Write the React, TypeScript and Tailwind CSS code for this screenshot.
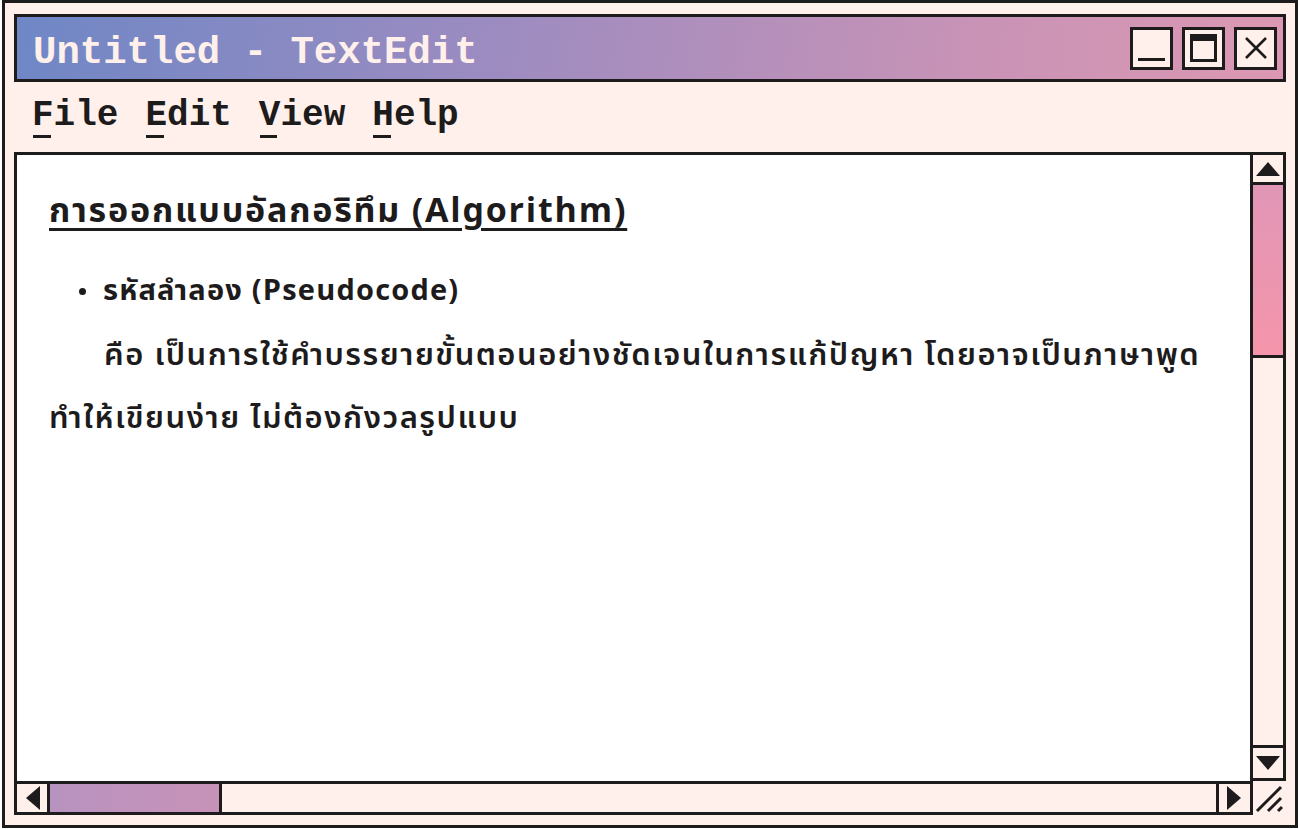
import React from "react";

const ink = "border-[#1d1b1c]";

function TitleButton({ children }: { children: React.ReactNode }) {
  return (
    <div className={`flex h-[43px] w-[43px] items-center justify-center border-[3px] ${ink} bg-[#fff0eb]`}>
      {children}
    </div>
  );
}

function Tri({ dir }: { dir: "up" | "down" | "left" | "right" }) {
  const pts = {
    up: "12,2 24,16 0,16",
    down: "0,2 24,2 12,16",
    left: "16,0 16,24 2,12",
    right: "0,0 0,24 14,12",
  }[dir];
  const w = dir === "up" || dir === "down" ? 24 : 16;
  const h = dir === "up" || dir === "down" ? 18 : 24;
  return (
    <svg width={w} height={h} viewBox={`0 0 ${w} ${h}`}>
      <polygon points={pts} fill="#1d1b1c" />
    </svg>
  );
}

function MenuItem({ first, rest }: { first: string; rest: string }) {
  return (
    <span>
      <span className="relative">
        {first}
        <span className="absolute left-[1px] right-[3px] bottom-[-2px] h-[3px] bg-[#1d1b1c]" />
      </span>
      {rest}
    </span>
  );
}

export default function App() {
  const thai = "font-['Noto_Sans_Thai','Noto_Sans',sans-serif]";
  return (
    <div className="h-[829px] w-[1299px] bg-white pl-[2px]">
      <div className={`flex h-[828px] w-[1296px] flex-col border-[3px] ${ink} bg-[#fff0eb] px-[9px] pt-[11px] pb-[10px]`}>
        {/* title bar */}
        <div className={`flex h-[68px] items-center justify-between border-[3px] ${ink} bg-[linear-gradient(100deg,#6f87c6_0%,#9f8cc0_40%,#c893b6_75%,#dc98b2_100%)] pl-[16px] pr-[6px]`}>
          <span className="pt-[10px] font-['Liberation_Mono',monospace] text-[39px] font-bold leading-none text-[#fff0eb]">
            Untitled - TextEdit
          </span>
          <div className="flex gap-[9px]">
            <TitleButton>
              <div className="mt-[22px] h-[3px] w-[27px] bg-[#1d1b1c]" />
            </TitleButton>
            <TitleButton>
              <div className={`h-[28px] w-[27px] border-[3px] border-t-[7px] ${ink}`} />
            </TitleButton>
            <TitleButton>
              <svg width="26" height="26" viewBox="0 0 26 26">
                <path d="M3 3 L23 23 M23 3 L3 23" stroke="#1d1b1c" strokeWidth="2.6" />
              </svg>
            </TitleButton>
          </div>
        </div>

        {/* menu */}
        <div className="flex h-[70px] items-center gap-[27px] pl-[18px] pb-[2px] font-['Liberation_Mono',monospace] text-[36px] font-bold text-[#1d1b1c]">
          <MenuItem first="F" rest="ile" />
          <MenuItem first="E" rest="dit" />
          <MenuItem first="V" rest="iew" />
          <MenuItem first="H" rest="elp" />
        </div>

        {/* document area */}
        <div className="flex flex-1 flex-col">
          <div className="flex flex-1">
            <div className={`flex-1 border-l-[3px] border-t-[3px] ${ink} bg-white pl-[32px] pr-[30px] pt-[37px] text-[#1d1b1c] ${thai}`}>
              <h1 className="text-[34px] font-bold leading-[40px] tracking-[1.8px] underline decoration-[3px] underline-offset-[6px]">
                การออกแบบอัลกอริทึม (Algorithm)
              </h1>
              <div className="mt-[39px] flex items-center gap-[17px] pl-[30px] text-[29px] font-bold leading-[40px] tracking-[1.2px]">
                <span className="h-[7px] w-[7px] rounded-full bg-[#1d1b1c]" />
                <span>รหัสลำลอง (Pseudocode)</span>
              </div>
              <p className="mt-[13px] indent-[55px] text-[31px] font-semibold leading-[63px] tracking-[1.5px]">
                คือ เป็นการใช้คำบรรยายขั้นตอนอย่างชัดเจนในการแก้ปัญหา โดยอาจเป็นภาษาพูด
                <br />
                ทำให้เขียนง่าย ไม่ต้องกังวลรูปแบบ
              </p>
            </div>
            <div className={`flex w-[36px] flex-col border-[3px] ${ink} bg-[#fff0eb]`}>
              <div className={`flex h-[30px] items-center justify-center border-b-[3px] ${ink}`}>
                <Tri dir="up" />
              </div>
              <div className={`h-[173px] border-b-[3px] ${ink} bg-[linear-gradient(180deg,#e196b6,#f595ab)]`} />
              <div className="flex-1" />
              <div className={`flex h-[33px] items-center justify-center border-t-[3px] ${ink}`}>
                <Tri dir="down" />
              </div>
            </div>
          </div>
          <div className="flex h-[34px]">
            <div className={`flex flex-1 border-[3px] ${ink} bg-[#fff0eb]`}>
              <div className={`flex w-[33px] items-center justify-center border-r-[3px] ${ink}`}>
                <Tri dir="left" />
              </div>
              <div className={`w-[172px] border-r-[3px] ${ink} bg-[linear-gradient(90deg,#b893c0,#c792b8)]`} />
              <div className="flex-1" />
              <div className={`flex w-[34px] items-center justify-center border-l-[3px] ${ink}`}>
                <Tri dir="right" />
              </div>
            </div>
            <div className="flex w-[33px] items-end justify-end pb-[2px] pr-[2px]">
              <svg width="30" height="30" viewBox="0 0 30 30">
                <path d="M3 28 L27 4 M14 28 L27 15 M24 28 L28 24" stroke="#1d1b1c" strokeWidth="3" />
              </svg>
            </div>
          </div>
        </div>
      </div>
    </div>
  );
}
